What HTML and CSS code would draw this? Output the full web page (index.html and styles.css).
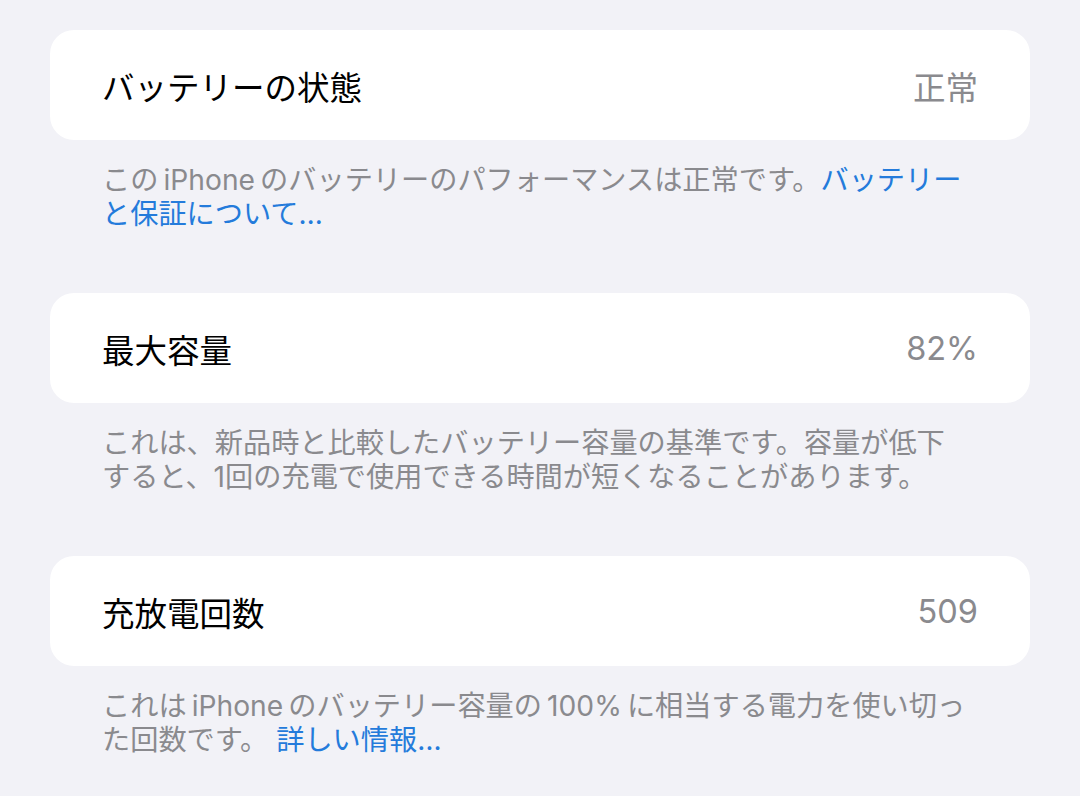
FILE: index.html
```html
<!DOCTYPE html>
<html lang="ja">
<head>
    <meta charset="UTF-8">
    <meta name="viewport" content="width=device-width, initial-scale=1.0">
    <title>バッテリーの状態</title>
    <link rel="stylesheet" href="styles.css">
</head>
<body>
    <div class="ajustes">
        <!-- Estado -->
        <div class="grupo">
            <div class="celda">
                <span class="titulo">バッテリーの状態</span>
                <span class="valor">正常</span>
            </div>
            <p class="nota">この&thinsp;iPhone&thinsp;のバッテリーのパフォーマンスは正常です。<a href="#">バッテリー<br>と保証について…</a></p>
        </div>

        <!-- Capacidad -->
        <div class="grupo">
            <div class="celda">
                <span class="titulo">最大容量</span>
                <span class="valor">82%</span>
            </div>
            <p class="nota">これは、新品時と比較したバッテリー容量の基準です。容量が低下<br>すると、1回の充電で使用できる時間が短くなることがあります。</p>
        </div>

        <!-- Ciclos -->
        <div class="grupo">
            <div class="celda">
                <span class="titulo">充放電回数</span>
                <span class="valor">509</span>
            </div>
            <p class="nota">これは&thinsp;iPhone&thinsp;のバッテリー容量の&thinsp;100%&thinsp;に相当する電力を使い切っ<br>た回数です。 <a href="#">詳しい情報…</a></p>
        </div>
    </div>
</body>
</html>
```

FILE: styles.css
```css
body {
    margin: 0;
    background-color: #f2f2f7;
    font-family: Inter, "Noto Sans CJK JP", sans-serif;
}

.ajustes {
    padding: 30px 50px;
    display: flex;
    flex-direction: column;
    gap: 62px;
}

.celda {
    height: 110px;
    background-color: #fff;
    border-radius: 24px;
    padding: 0 52px;
    display: flex;
    align-items: center;
    justify-content: space-between;
}

.titulo {
    font-size: 32.5px;
    color: #000;
}

.valor {
    font-size: 32.5px;
    color: #8a8a8e;
}

.nota {
    margin: 23px 0 0;
    padding: 0 52px 0 52px;
    font-size: 28.2px;
    line-height: 34px;
    color: #8a8a8e;
    white-space: nowrap;
}

.nota a {
    color: #247bdb;
    text-decoration: none;
}
```
